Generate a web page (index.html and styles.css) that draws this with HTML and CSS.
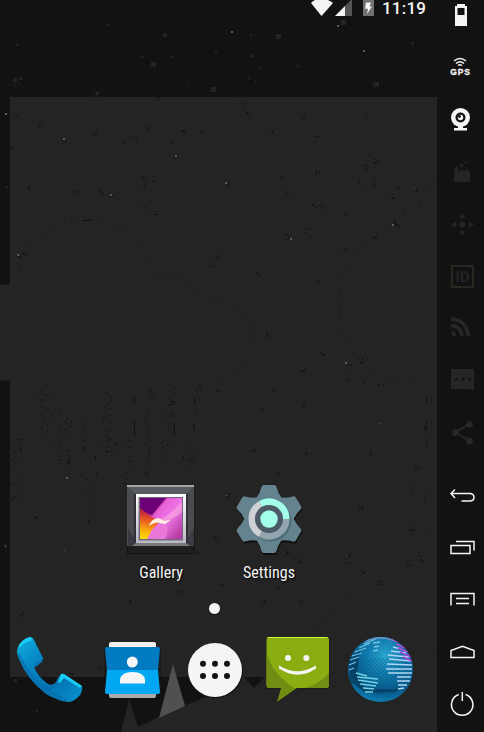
FILE: index.html
```html
<!DOCTYPE html>
<html lang="en">
<head>
<meta charset="utf-8">
<title>Phone home screen</title>
<link rel="stylesheet" href="styles.css">
</head>
<body>
<main class="device">
  <section class="screen">
    <svg class="wallpaper" viewBox="0 0 437 732" aria-hidden="true">
      <path fill="#242424" d="M10 97H437V732H121L129 699L138 727L159 717L205 697L227 685L240 677H10V381L0 380V285L10 284Z"/>
      <path fill="#505052" d="M159 718L173 664L185 706Z"/>
      <path fill="#121212" d="M244 677H265L254 688Z"/>
      <g fill="none" stroke="#121212" stroke-dasharray="1 4 2 6">
        <path d="M18 272Q30 222 86 220Q139 221 155 275Q189 273 202 299Q240 298 249 326Q257 367 216 383"/>
        <path d="M437 176Q424 191 417 211M401 221Q342 249 339 297Q341 379 412 382"/>
        <path d="M315 633L350 591M392 612L437 657"/>
      </g>
      <path fill="none" stroke="#121212" d="M82 220.500H92M134.500 397V404M134.500 421V437M172.500 400V405M174.500 424V435M194.500 398V405M193.500 424V430M20.500 445V452M83.500 445V452M68.500 458V464M95.500 455V461M424.500 426V431M426.500 397V402M426.500 421V431M426.500 441V446"/>
      <g id="specks"></g>
    </svg>
    <header class="status">
      <svg width="65" height="17" viewBox="310 0 65 17">
        <path fill="#f5f5f5" d="M311 3Q313 0 321 -2Q330 0 333 3L321.500 16Z"/>
        <path fill="#555" d="M345 6L352 -1V16H345Z"/><path fill="#f5f5f5" d="M335 16L345 6V16Z"/>
        <path fill="#717171" d="M363 0H374V16H363Z"/><path fill="#f5f5f5" d="M366 2.500H371L369.500 6.500H372L367 14L368 8.700H365Z"/>
      </svg>
      <span class="clock">11:19</span>
    </header>
    <div class="apps">
      <div class="app">
        <svg width="80" height="80" viewBox="121 480 80 80">
          <defs>
            <linearGradient id="photo" x1="0" y1="0" x2="1" y2=".8"><stop stop-color="#710077"/><stop offset=".3" stop-color="#a20d69"/><stop offset=".42" stop-color="#e85ed5"/><stop offset=".65" stop-color="#ee79e8"/><stop offset="1" stop-color="#b63ea4"/></linearGradient>
            <linearGradient id="flame" x1=".4" y1="0" x2=".3" y2="1"><stop stop-color="#a8104a"/><stop offset=".4" stop-color="#ea5a20"/><stop offset=".7" stop-color="#f6a810"/><stop offset="1" stop-color="#f8dc00"/></linearGradient>
            <linearGradient id="rim" x1="0" y1="0" x2="0" y2="1"><stop stop-color="#fff"/><stop offset="1" stop-color="#b9b9c4"/></linearGradient>
          </defs>
          <path fill="#1f1f1f" stroke="#111" d="M127.500 490H194V553.500H127.500Z"/>
          <path fill="#4b4c50" d="M127 486H194V546H127Z"/>
          <path fill="#585b61" d="M127 486H194L186 494H136Z"/>
          <path fill="#3a3b43" d="M128 528L136 542V546H128ZM194 528L186 542V546H194Z"/>
          <path fill="#303136" d="M134 494H136V543H134ZM186 494H188V543H186Z"/>
          <path fill="#767a7b" d="M136 543H186L190 546H132Z"/>
          <path fill="#a4a5a7" d="M127 485H194V487H127Z"/>
          <path fill="url(#rim)" d="M136 494H186V543H136Z"/>
          <path fill="#76667e" d="M138.500 497H183V540.500H138.500Z"/>
          <path fill="url(#photo)" d="M140 498H182V539H140Z"/>
          <path fill="#6c0074" d="M140 498H166L152 515L140 510Z"/>
          <path fill="url(#flame)" d="M140 508L150 516L160 521L152 530L147 539H140Z"/>
          <path fill="#f9a3de" d="M160 520Q172 514 182 502V512Q172 520 163 523Z" opacity=".7"/>
          <path fill="#e878d8" d="M160 523L147 539H165Q170 530 165 523Z"/>
          <path fill="#fff0df" d="M149 526Q152 517 160 518.500L164 521L171 520L165 524L157 522.500Q152 523 149 526Z"/>
        </svg>
        <span class="label">Gallery</span>
      </div>
      <div class="app">
        <svg width="80" height="80" viewBox="229 480 80 80">
          <defs>
            <path id="tooth" d="M-12 -22Q-9 -26 -7.500 -32Q-7 -34 -5 -34H5Q7 -34 7.500 -32Q9 -26 12 -22L0 0Z"/>
            <g id="gear"><circle r="25"/><use href="#tooth"/><use href="#tooth" transform="rotate(60)"/><use href="#tooth" transform="rotate(120)"/><use href="#tooth" transform="rotate(180)"/><use href="#tooth" transform="rotate(240)"/><use href="#tooth" transform="rotate(300)"/></g>
          </defs>
          <use href="#gear" fill="#101010" transform="translate(269.500 521)"/>
          <use href="#gear" fill="#65838f" transform="translate(269 519)"/>
          <circle cx="271" cy="521" r="20.500" fill="#4f6e7b"/>
          <g fill="none" stroke-width="7" transform="translate(269 519)">
            <path stroke="#a3ffe9" d="M-8.500 -14.700A17 17 0 0 1 17 0"/>
            <path stroke="#93a6b0" d="M17 0A17 17 0 0 1 -8.500 14.700"/>
            <path stroke="#cfd0d4" d="M-8.500 14.700A17 17 0 0 1 -8.500 -14.700"/>
          </g>
          <circle cx="269" cy="519" r="14" fill="#4b5a66"/><circle cx="269" cy="519" r="8.700" fill="#a3ffe9"/>
        </svg>
        <span class="label">Settings</span>
      </div>
    </div>
    <div class="pager"><i class="page"></i></div>
    <nav class="dock">
      <svg width="75" height="75" viewBox="12 632 75 75">
        <defs><linearGradient id="handset" x1="0" y1="0" x2="1" y2="1"><stop stop-color="#11b3df"/><stop offset=".3" stop-color="#0788c6"/><stop offset=".65" stop-color="#0573b4"/><stop offset="1" stop-color="#0895cc"/></linearGradient></defs>
        <path fill="url(#handset)" d="M30 637L33 638L43 658Q43 661 39 664L34 667Q37 676 48 684Q53 686 56 682Q58 677 61 674Q63 673 67 676L82 686Q83 690 80 695Q75 701 69 702Q58 701 46 694Q27 679 19 659Q15 651 19 645Q24 638 30 637Z"/>
        <path fill="#17cdf1" d="M19 645Q24 638 30 637L32 638L31 641Q24 642 19 648ZM61 674Q63 673 67 676L82 686L80 688L64 678L60 683L58 682Z"/>
        <path fill="#0570ae" d="M18 652L28 668Q40 687 65 698L69 702Q50 698 35 684Q22 670 18 655ZM34 664L42 659L43 661L35 668Z" opacity=".75"/>
      </svg>
      <svg width="65" height="65" viewBox="100 637 65 65">
        <path fill="#141414" d="M104 648H161V696H104Z" opacity=".5"/>
        <rect x="109" y="642" width="47" height="10" rx="2" fill="#f0f0f0"/><rect x="109" y="688" width="47" height="10" rx="2" fill="#a8aab0"/>
        <path fill="#007ac1" d="M107 647H158Q160 647 160 649L158 670H107L105 649Q105 647 107 647Z"/>
        <path fill="#00a8f3" d="M107 670H158L160 692Q160 694 158 694H107Q105 694 105 692Z"/>
        <path fill="#026eae" d="M132 657Q138 656 138.500 662Q138 669 132 669Z"/>
        <circle cx="132.300" cy="662" r="5.500" fill="#f5f5f5"/><path fill="#f5f5f5" d="M120 683.500V680Q121 672 132.500 672Q144 672 145 680V683.500Z"/>
      </svg>
      <svg width="60" height="60" viewBox="185 640 60 60">
        <circle cx="216" cy="671" r="27" fill="#111"/><circle cx="215" cy="670" r="27" fill="#f5f5f5"/>
        <g fill="#121212"><circle cx="203" cy="663.700" r="3"/><circle cx="215" cy="663.700" r="3"/><circle cx="227" cy="663.700" r="3"/><circle cx="203" cy="676" r="3"/><circle cx="215" cy="676" r="3"/><circle cx="227" cy="676" r="3"/></g>
      </svg>
      <svg width="75" height="75" viewBox="260 632 75 75">
        <path fill="#111" d="M266 640H330V689H297L277 703L281 689H266Z" opacity=".5"/>
        <rect x="266.500" y="637" width="62.500" height="51" rx="3" fill="#8aae12"/>
        <path fill="#718e12" d="M266.500 651Q271 673 294 688H269Q266.500 688 266.500 685ZM329 673V685Q329 688 326 688H305Q320 684 329 673ZM281 688H297L277 702Z"/>
        <path fill="#d4f43d" d="M269 637H326Q328 637 328 638H267Q267 637 269 637Z"/>
        <circle cx="288" cy="658" r="3" fill="#f5f5f5"/><circle cx="306.300" cy="658" r="3" fill="#f5f5f5"/>
        <path fill="#f5f5f5" d="M279 665.500Q297 677 316 665.500V668.500Q298 681 279 668.500Z"/>
      </svg>
      <svg width="75" height="75" viewBox="343 632 75 75">
        <defs>
          <radialGradient id="sea" cx=".57" cy=".3" r=".75"><stop stop-color="#2ba5cf"/><stop offset=".35" stop-color="#107cad"/><stop offset=".72" stop-color="#07598a"/><stop offset="1" stop-color="#118cc1"/></radialGradient>
          <clipPath id="ball"><circle cx="380.500" cy="669.500" r="32.500"/></clipPath>
          <pattern id="mesh" width="4" height="4" patternUnits="userSpaceOnUse"><circle cx="1" cy="1" r=".7" fill="#064f7b"/><circle cx="3" cy="3" r=".7" fill="#064f7b"/></pattern>
        </defs>
        <g clip-path="url(#ball)">
          <path fill="url(#sea)" d="M347 636H414V703H347Z"/><path fill="url(#mesh)" d="M347 658H414V695H347Z" opacity=".7"/>
          <path fill="#043b5d" d="M348 660L360 650L357 673L365 689L400 689L408 685L395 692L366 693L350 682Z" opacity=".75"/>
          <path fill="none" stroke="#75c4e4" stroke-width="1.300" d="M364 644L378 638M359 648L370 643M355 652L366 648M352 656L362 653M350 660L359 657M349 665L356 662M349 670L354 668M373 643L380 642M374 647L379 646M373 651L378 650"/>
          <path fill="none" stroke="#71d3e6" stroke-width="1.400" d="M356 673L367 676M357 677L378 679M358 680L378 683M360 684L376 686M363 688L374 689M365 692L373 692"/>
          <path fill="none" stroke="#b2d6f3" stroke-width="1.300" d="M393 647L401 649M391 651L406 653M388 655L409 657M389 659L411 661M387 664L412 665M386 669L412 669M388 673L412 673M397 677L411 677M397 681L410 681M398 685L407 685M398 689L404 688"/>
          <path fill="none" stroke="#b342dd" stroke-width="1.700" d="M389 639L399 642M396 644L405 648M398 648L408 652M400 652L411 657M403 657L412 661"/>
          <path fill="none" stroke="#6395ca" stroke-width="2" d="M365 641Q379 635 394 640"/>
        </g>
      </svg>
    </nav>
  </section>
  <aside class="toolbar">
    <svg viewBox="437 -11 47 52"><path fill="#f5f5f5" fill-rule="evenodd" d="M457 4H465V6H467V26H455V6H457ZM457.500 8V15H464.500V8Z"/></svg>
    <svg viewBox="437 41 47 52"><path class="line" d="M454 61Q460 56 466 61M456 63.500Q460 60 464 63.500M458 65.500Q460 64 462 65.500"/><text class="gps" x="450.300" y="75" textLength="19.500">GPS</text></svg>
    <svg viewBox="437 93 47 52"><circle cx="460.500" cy="117.500" r="9.500" fill="#f5f5f5"/><circle cx="460.500" cy="117.500" r="5" fill="#121212"/><circle cx="460.500" cy="117.500" r="2.700" fill="#f5f5f5"/><circle cx="459.500" cy="116.500" r="1.400" fill="#121212"/><path fill="#f5f5f5" d="M458 126H463V128H467V130.500H454V128H458Z"/></svg>
    <svg viewBox="437 145 47 52" fill="#242424"><path d="M454 172L457 169L459 172L462 169L464 172L467 169L470 172V182H454ZM454 168L457 166L459 169L455 171ZM459 165L462 163L464 166L461 168ZM464 163L467 161V164Z"/></svg>
    <svg viewBox="437 197 47 52" fill="#262626"><circle cx="462.300" cy="224.500" r="2.900"/><path d="M459.500 218L462.300 213L465 218ZM459.500 231H465L462.300 236ZM456 221.500V227.500L451 224.500ZM469 221.500V227.500L474 224.500Z"/></svg>
    <svg viewBox="437 249 47 52"><rect x="452" y="266" width="21" height="21" fill="none" stroke="#292820" stroke-width="2"/><text class="id" x="455.500" y="282">ID</text></svg>
    <svg viewBox="437 301 47 52"><path fill="none" stroke="#272727" stroke-width="3.500" d="M451 319Q467 320 468.300 336M451 325.500Q461 326 462 336"/><path fill="#272727" d="M451 331Q456 331 456 336H453Z"/></svg>
    <svg viewBox="437 353 47 52"><path fill="#262626" d="M451 369H474V391L470 389H451Z"/><g fill="#121212"><circle cx="456" cy="379.300" r="1.500"/><circle cx="463" cy="379.300" r="1.500"/><circle cx="469.500" cy="379.300" r="1.500"/></g></svg>
    <svg viewBox="437 405 47 52" fill="#272727"><path stroke="#272727" stroke-width="2" fill="none" d="M469.500 424L455.500 432.500L469.500 441"/><circle cx="455.500" cy="432.500" r="3.500"/><circle cx="469.500" cy="424.300" r="3.400"/><circle cx="469.500" cy="441" r="3.400"/></svg>
    <svg class="keys" viewBox="437 469 47 52"><path class="line" d="M455 489.500L451 493.500L455 498M451 493.500H469.500Q474 493.500 474 497.500Q474 501 469.500 501H461.500"/></svg>
    <svg viewBox="437 521 47 52"><path class="line" d="M451 545.500H470V553.500H451ZM456 541.500H474V550.500"/></svg>
    <svg viewBox="437 573 47 52"><path class="line" d="M451 605.500V593.500H474V605.500M456 598.500H469M456 603.500H469"/></svg>
    <svg viewBox="437 625 47 52"><path class="line" d="M451 657.500V650.500L462.500 646.300L474 650.500V657.500Z"/></svg>
    <svg viewBox="437 677 47 52"><path class="line" d="M458.700 694.500A10.700 10.700 0 1 0 465.700 694.500M462.300 692V701"/></svg>
  </aside>
</main>
<script src="script.js"></script>
</body>
</html>
```
FILE: styles.css
```css
body { margin: 0; background: #121212; font-family: Roboto, "Liberation Sans", sans-serif; }
.device { display: flex; width: 484px; height: 732px; overflow: hidden; background: #121212; }
.screen { position: relative; display: flex; flex-direction: column; width: 437px; height: 732px; }
.wallpaper { position: absolute; inset: 0; width: 437px; height: 732px; }
.status, .apps, .pager, .dock { position: relative; }
.status { display: flex; justify-content: flex-end; gap: 8px; height: 480px; padding-right: 8px; color: #f5f5f5; }
.status svg { flex: none; margin-right: -1px; }
.clock { width: 47px; font-size: 17px; line-height: 17px; font-weight: 500; letter-spacing: .2px; white-space: nowrap; }
.apps { display: flex; gap: 28px; height: 116px; padding-left: 121px; }
.app { display: flex; flex-direction: column; align-items: center; width: 80px; }
.app svg { flex: none; }
.label { margin-top: 3px; font-family: "Roboto Condensed", Roboto, sans-serif; font-size: 16px; line-height: 20px; color: #f5f5f5; text-shadow: 1px 1px 2px #000; }
.pager { display: flex; justify-content: center; height: 36px; padding: 7px 8px 0 0; box-sizing: border-box; }
.page { width: 11px; height: 11px; border-radius: 50%; background: #f5f5f5; box-shadow: 0 1px 1px #0c0c0c; }
.dock { display: flex; align-items: center; height: 75px; padding-left: 12px; }
.dock svg { flex: none; }
.dock svg:nth-child(2) { margin-left: 13px; }
.dock svg:nth-child(3) { margin-left: 20px; }
.dock svg:nth-child(4) { margin-left: 15px; }
.dock svg:nth-child(5) { margin-left: 8px; }
.toolbar { display: flex; flex-direction: column; width: 47px; margin-top: -11px; }
.toolbar svg { width: 47px; height: 52px; flex: none; }
.toolbar .keys { margin-top: 12px; }
.line { fill: none; stroke: #f5f5f5; stroke-width: 1.5; }
.gps { font: bold 8.5px "Liberation Sans", sans-serif; fill: #f5f5f5; stroke: #f5f5f5; stroke-width: .3px; }
.id { font: 500 15px Roboto, sans-serif; fill: #262626; }
```
FILE: script.js
```js
const layer = document.getElementById("specks");
let seed = 17;
const random = () => (seed = (seed * 16807) % 2147483647) / 2147483647;

function dot(x, y, color, w = 1, h = 1) {
  const r = document.createElementNS("http://www.w3.org/2000/svg", "rect");
  r.setAttribute("x", Math.round(x));
  r.setAttribute("y", Math.round(y));
  r.setAttribute("width", w);
  r.setAttribute("height", h);
  r.setAttribute("fill", color);
  layer.append(r);
}

function scatter(x, y, w, h, count, color) {
  for (let i = 0; i < count; i++) dot(x + random() * w, y + random() * h, color);
}

// Small dark clusters over the light panel.
const clusters = [
  [15,113],[41,123],[94,132],[64,141],[121,142],[133,137],[148,126],[183,132],[202,132],[172,142],[158,97],[143,177],[153,178],[143,187],[28,187],[74,191],[100,192],[111,194],[143,206],[154,211],[11,147],[175,157],[227,182],[241,103],
  [247,113],[302,118],[365,115],[271,132],[316,137],[316,172],[375,161],[365,166],[281,177],[286,192],[360,182],[374,182],[312,206],[320,206],[345,214],[395,188],[390,196],[415,189],[404,211],[393,222],[397,224],[306,230],[288,236],[375,235],
  [17,255],[24,255],[209,263],[216,257],[343,249],[257,273],[317,280],[267,334],[321,354],[302,369],[348,365],[361,360],[347,379],[363,379],[380,385],[273,389],[302,404],[262,408],[252,450],[306,454],[368,452],[417,467],[277,473],[217,390],[197,388],
  [35,517],[88,519],[360,507],[197,551],[286,552],[300,561],[348,553],[362,571],[178,591],[220,584],[276,586],[129,600],[262,601],[301,602],[379,582],[20,614],[227,495],[215,537],[347,563],[408,562],[420,558],[410,530],[70,671],[98,666]
];
clusters.forEach(([x, y]) => scatter(x - 2, y - 2, 5, 5, 8, "#121212"));

// Vertical streaks: x, y, width, height, number of specks.
[[9,438,13,65,40],[38,383,14,68,42],[57,397,4,80,30],[64,418,7,60,30],[83,416,3,38,14],[102,392,9,50,34],[102,438,14,17,26],[120,436,12,40,17],[142,410,8,66,48],[147,384,8,20,14],[161,400,14,60,44],[173,383,2,20,8],[194,398,2,42,8],[182,440,14,25,24],[83,477,9,30,15],[405,477,25,90,36],[425,397,2,60,6],[95,450,3,28,7],[40,385,1,22,5],[124,477,4,12,8]]
  .forEach(a => scatter(...a, "#121212"));

// Faint stars on the dark sky: x, y, size.
[[107,24,2],[163,33,4],[16,44,2],[60,49,1],[141,56,2],[151,62,5],[171,56,2],[125,64,1],[132,62,1],[215,51,2],[13,78,4],[19,77,3],[96,92,3],[188,82,1],[211,87,5],[341,20,5],[250,34,2],[276,34,5],[251,54,3],[259,67,2],[297,65,2],[411,42,3],[374,82,5],[320,34,1],[360,39,1],[6,186,2],[14,679,3],[36,710,2],[4,545,3]]
  .forEach(([x, y, s]) => dot(x, y, "#242424", s, s));
[[96,93],[213,90],[376,84],[187,83],[251,78],[15,84]].forEach(([x, y]) => scatter(x - 4, y - 3, 9, 6, 8, "#242424"));

[[231,31],[5,113],[63,138],[110,194],[175,155],[225,182],[337,25],[363,50],[17,254],[66,477],[345,362],[392,224],[290,238]]
  .forEach(([x, y]) => dot(x, y, "#5a5a5a", 2, 2));
[[380,423],[414,188],[64,550],[226,495],[346,555],[5,545]]
  .forEach(([x, y]) => dot(x, y, "#5a5a5a"));
```
